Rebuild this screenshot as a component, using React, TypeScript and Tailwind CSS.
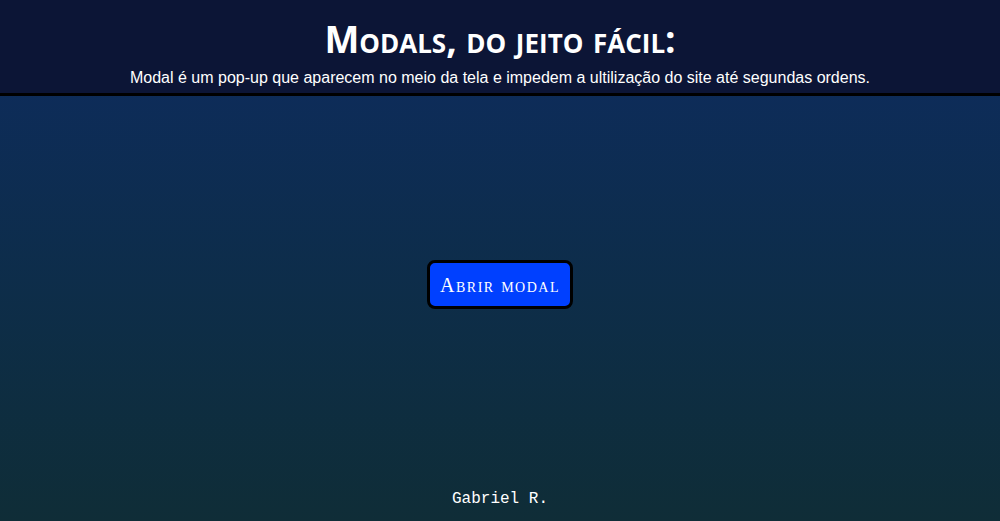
import React from 'react'

export default function App() {
  return (
    <div className="flex flex-col h-[521px] w-full bg-gradient-to-b from-[#0e2b60] to-[#0f2d37]">
      <header className="h-[96px] bg-[#0c1536] border-b-[3px] border-black flex flex-col items-center text-white">
        <h1 className="mt-[15px] text-[37px] leading-[48px] font-bold [font-variant:small-caps] font-['Open_Sans',sans-serif]">
          Modals, do jeito fácil:
        </h1>
        <p className="mt-[5px] text-[16px] leading-[20px] font-['Liberation_Sans',Arial,sans-serif]">
          Modal é um pop-up que aparecem no meio da tela e impedem a ultilização do site até segundas ordens.
        </p>
      </header>
      <main className="flex-1 flex items-center justify-center">
        <button className="mt-[-4px] w-[146px] h-[49px] bg-[#0040ff] border-[3px] border-black rounded-[8px] text-white text-[20px] tracking-[1.5px] [font-variant:small-caps] font-['Liberation_Serif',serif]">
          Abrir modal
        </button>
      </main>
      <footer className="h-[44px] flex items-center justify-center text-white text-[16px] font-['Liberation_Mono',monospace]">
        Gabriel R.
      </footer>
    </div>
  )
}
